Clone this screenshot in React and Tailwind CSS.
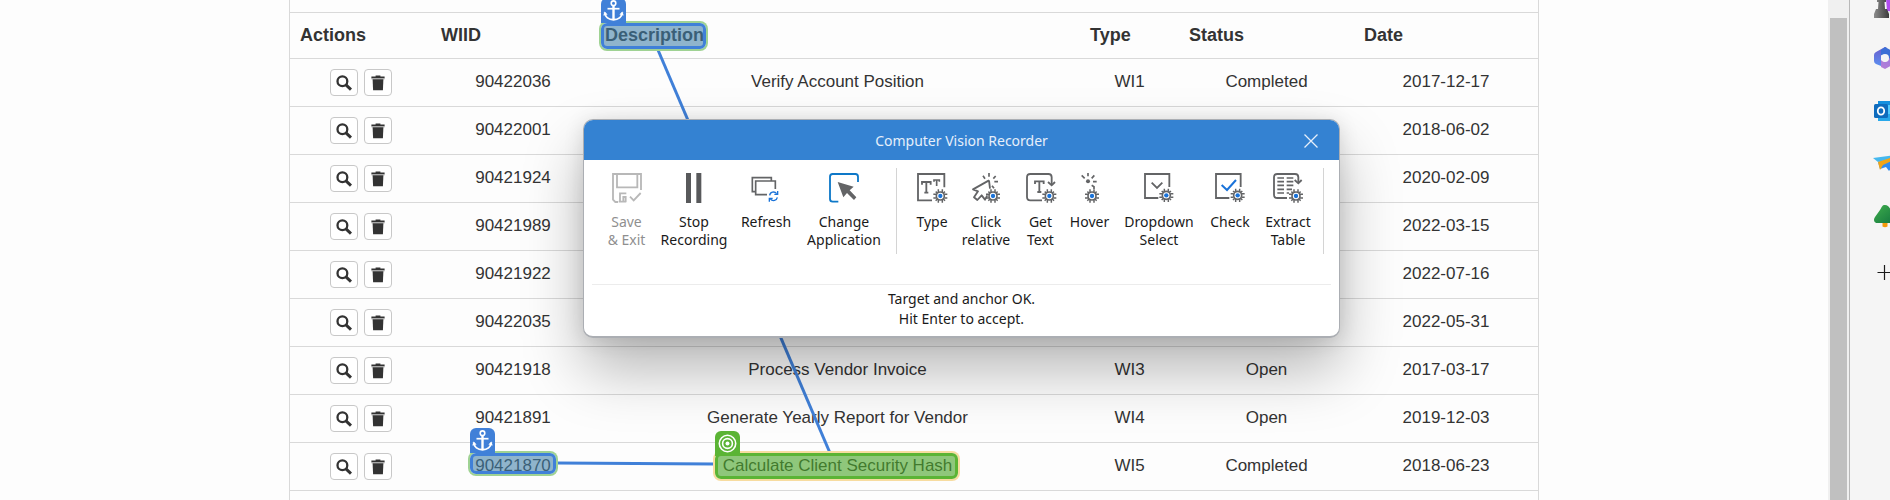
import React from "react";

const rows = [
  { id: "90422036", description: "Verify Account Position", type: "WI1", status: "Completed", date: "2017-12-17" },
  { id: "90422001", description: "", type: "", status: "", date: "2018-06-02" },
  { id: "90421924", description: "", type: "", status: "", date: "2020-02-09" },
  { id: "90421989", description: "", type: "", status: "", date: "2022-03-15" },
  { id: "90421922", description: "", type: "", status: "", date: "2022-07-16" },
  { id: "90422035", description: "", type: "", status: "", date: "2022-05-31" },
  { id: "90421918", description: "Process Vendor Invoice", type: "WI3", status: "Open", date: "2017-03-17" },
  { id: "90421891", description: "Generate Yearly Report for Vendor", type: "WI4", status: "Open", date: "2019-12-03" },
  { id: "90421870", description: "Calculate Client Security Hash", type: "WI5", status: "Completed", date: "2018-06-23" },
];

const columns = [
  { name: "Actions", width: "w-[141px]" },
  { name: "WIID", width: "w-[164px]" },
  { name: "Description", width: "w-auto" },
  { name: "Type", width: "w-[99px]" },
  { name: "Status", width: "w-[175px]" },
  { name: "Date", width: "w-[184px]" },
];

/* ---------- table ---------- */

function SearchIcon() {
  return (
    <svg className="h-4 w-4" viewBox="0 0 16 16" fill="none" stroke="#333" aria-hidden="true">
      <circle cx="6.4" cy="6.2" r="4.9" strokeWidth="2.3" />
      <path d="M10 9.8 15 14.6" strokeWidth="3" />
    </svg>
  );
}

function TrashIcon() {
  return (
    <svg className="h-4 w-4" viewBox="0 0 16 16" fill="#333" aria-hidden="true">
      <path d="M5.6 1.6V.4h4.8v1.2h4.2v1.7H1.4V1.6z" />
      <path d="M1.4 3.3h13.2v1H1.4z" fill="#9a9a9a" />
      <path d="M2.6 4.3h10.800l-.5 10.900H3.100z" />
    </svg>
  );
}

function RowButton({ label, children }) {
  return (
    <button
      type="button"
      aria-label={label}
      className="flex h-[27px] w-7 items-center justify-center rounded border border-[#c8c8c8] bg-white"
    >
      {children}
    </button>
  );
}

function WorkItemsTable() {
  return (
    <table className="w-full table-fixed border-collapse text-[#333]">
      <colgroup>
        {columns.map((c) => (
          <col key={c.name} className={c.width} />
        ))}
      </colgroup>
      <thead className="text-lg leading-[25px]">
        <tr className="border-y border-[#d9d9d9]">
          {columns.map((c) => (
            <th key={c.name} scope="col" className="px-2.5 py-2.5 text-left font-bold">
              {c.name}
            </th>
          ))}
        </tr>
      </thead>
      <tbody>
        {rows.map((r) => (
          <tr key={r.id} className="border-b border-[#d9d9d9] text-center align-top">
            <td className="py-2.5">
              <div className="flex justify-center gap-1.5">
                <RowButton label={"View " + r.id}>
                  <SearchIcon />
                </RowButton>
                <RowButton label={"Delete " + r.id}>
                  <TrashIcon />
                </RowButton>
              </div>
            </td>
            <td className="py-2.5">{r.id}</td>
            <td className="py-2.5">{r.description}</td>
            <td className="py-2.5">{r.type}</td>
            <td className="py-2.5">{r.status}</td>
            <td className="py-2.5">{r.date}</td>
          </tr>
        ))}
      </tbody>
    </table>
  );
}

/* ---------- target and anchor markers ---------- */

function AnchorGlyph() {
  return (
    <svg className="h-[25px] w-[25px]" viewBox="0 0 25 25" fill="none" stroke="#fff" aria-hidden="true">
      <circle cx="12.5" cy="5.2" r="2.3" strokeWidth="1.6" />
      <path d="M12.5 7.5V22" strokeWidth="2.4" />
      <path d="M6.5 10.7h12" strokeWidth="1.7" />
      <path d="M3.6 14.5c.6 4.6 4.2 7.3 8.9 7.3s8.300-2.700 8.900-7.300" strokeWidth="1.9" />
      <path d="M2.300 17.500 3.600 13.500 6.600 16.500zM22.700 17.500 21.400 13.500 18.400 16.500z" fill="#fff" stroke="none" />
    </svg>
  );
}

function TargetGlyph() {
  return (
    <svg className="h-[25px] w-[25px]" viewBox="0 0 25 25" fill="none" stroke="#fff" strokeWidth="1.6" aria-hidden="true">
      <circle cx="12.5" cy="12.5" r="8.2" />
      <circle cx="12.5" cy="12.5" r="4.9" />
      <circle cx="12.5" cy="12.5" r="2" fill="#fff" stroke="none" />
    </svg>
  );
}

function Markers() {
  return (
    <div className="pointer-events-none absolute inset-0" aria-hidden="true">
      <svg className="absolute inset-0 h-full w-full" stroke="#4080d8" strokeWidth="3">
        <line x1="368" y1="50" x2="540" y2="453" />
        <line x1="267" y1="463" x2="424" y2="464" />
      </svg>

      <div className="absolute left-[311px] top-[23px] h-[26px] w-[105px] rounded-md border-[3px] border-[#4080d8] bg-[#3f80a9]/58 ring-2 ring-[#9fd293]" />
      <div className="absolute left-[311px] top-[-2px] rounded-t-md bg-[#4080d8]">
        <AnchorGlyph />
      </div>

      <div className="absolute left-[180px] top-[453px] h-[21px] w-[86px] rounded-md border-[3px] border-[#4080d8] bg-[#3f80a9]/58 ring-2 ring-[#9fd293]" />
      <div className="absolute left-[180px] top-[428px] rounded-t-md bg-[#4080d8]">
        <AnchorGlyph />
      </div>

      <div className="absolute left-[425px] top-[453px] h-[26px] w-[243px] rounded-md border-[3px] border-[#5bb435] bg-[#4ca62c]/62 ring-2 ring-[#f7dca0]" />
      <div className="absolute left-[425px] top-[431px] rounded-t-md bg-[#5bb435]">
        <TargetGlyph />
      </div>
    </div>
  );
}

/* ---------- recorder icons, drawn on a 90 unit grid ---------- */

function ToolIcon({ children }) {
  return (
    <svg className="h-[30px] w-[30px] overflow-visible" viewBox="0 0 90 90" fill="none" stroke="#636466" strokeWidth="5.5" aria-hidden="true">
      {children}
    </svg>
  );
}

function Gear({ x, y }) {
  return (
    <g transform={"translate(" + x + " " + y + ")"}>
      <path
        d="M-6 -20V-11M6 -20V-11M-6 20V11M6 20V11M-21 -5H-12M-21 6H-12M21 -5H12M21 6H12M-14 -13-9 -9M14 -13 9 -9M-14 14-9 9M14 14 9 9"
        strokeWidth="4.5"
      />
      <circle r="12" fill="#fff" strokeWidth="5" />
      <circle r="6.5" fill="#1a73d9" stroke="none" />
    </g>
  );
}

function BigT({ x, y }) {
  return (
    <g transform={"translate(" + x + " " + y + ")"}>
      <path d="M2 10V2H28V10M15 2V34M9 34H21" />
    </g>
  );
}

const SaveIcon = () => (
  <ToolIcon>
    <g stroke="#b8b8b8">
      <path d="M87 51V3H3V80L10 87H18M15 3V43H76V3" />
      <path d="M24 88V61H43M34 88V72H41V88M20 86H42" />
      <path d="M54 71 65 82 86 60" />
    </g>
  </ToolIcon>
);

const PauseIcon = () => (
  <ToolIcon>
    <path d="M21 0H36V90H21zM52 0H67V90H52z" fill="#58595b" stroke="none" />
  </ToolIcon>
);

const RefreshIcon = () => (
  <ToolIcon>
    <path d="M12 56H4V14H61V22M48 65H14V24H73V48" strokeWidth="5" />
    <g stroke="#1a73d9" strokeWidth="4">
      <path d="M56 67C57 57 70 53 77 62M79 73C77 83 65 86 58 78" />
      <path d="M80 54V64H70M55 86V76H65" />
    </g>
  </ToolIcon>
);

const ChangeAppIcon = () => (
  <ToolIcon>
    <path d="M87 27V11Q87 3 79 3H11Q3 3 3 11V78Q3 86 11 86H28" stroke="#0e78c8" />
    <path d="M26 27 74 41 62 52 82 73 75 81 54 60 43 73z" fill="#636466" stroke="none" />
  </ToolIcon>
);

const TypeIcon = () => (
  <ToolIcon>
    <path d="M45 82H3V3H82V43" />
    <BigT x={13} y={25} />
    <path d="M51 26V21H67V26M59 21V39" strokeWidth="5" />
    <Gear x={70} y={69} />
  </ToolIcon>
);

const ClickRelativeIcon = () => (
  <ToolIcon>
    <path d="M54 22 6 49 21 55 9 73 19 81 32 67 42 80 49 67M54 22 57 47" strokeLinejoin="round" />
    <path d="M54 0V11M36 8 42 17M74 9 67 17M70 26H81M63 38 69 46" strokeWidth="5" />
    <Gear x={66} y={69} />
  </ToolIcon>
);

const GetTextIcon = () => (
  <ToolIcon>
    <path d="M48 82H13Q3 82 3 72V13Q3 3 13 3H67Q77 3 77 13V34" />
    <path d="M66 27 77 37 87 27" />
    <BigT x={25} y={23} />
    <Gear x={70} y={69} />
  </ToolIcon>
);

const HoverIcon = () => (
  <ToolIcon>
    <circle cx="39" cy="25" r="6" fill="#636466" stroke="none" />
    <path d="M39 0V10M20 7 29 16M58 7 50 16M54 26H65M50 37 57 41V48" strokeWidth="5" />
    <Gear x={51} y={69} />
  </ToolIcon>
);

const DropdownIcon = () => (
  <ToolIcon>
    <path d="M43 75H3V3H76V42" />
    <path d="M23 29 39 45 55 29" />
    <Gear x={67} y={67} />
  </ToolIcon>
);

const CheckIcon = () => (
  <ToolIcon>
    <path d="M43 75H3V3H77V42" />
    <path d="M20 36 36 51 63 21" stroke="#1a73d9" strokeWidth="6" />
    <Gear x={68} y={67} />
  </ToolIcon>
);

const ExtractIcon = () => (
  <ToolIcon>
    <path d="M42 75H13Q3 75 3 65V13Q3 3 13 3H66Q76 3 76 13V30" />
    <path d="M65 21 76 31 86 21" />
    <path
      d="M13 15H33M41 15H61M13 26H33M41 26H61M13 37H33M41 37H61M13 49H33M41 49H57M13 60H33M41 60H48"
      strokeWidth="5"
    />
    <Gear x={69} y={69} />
  </ToolIcon>
);

/* ---------- recorder window ---------- */

function Tool({ icon: Icon, lines, width, disabled }) {
  return (
    <button
      type="button"
      disabled={disabled}
      className={"flex shrink-0 flex-col items-center gap-2.5 text-[#1a1a1a] disabled:text-[#8f8f8f] " + width}
    >
      <Icon />
      <span className="block whitespace-nowrap text-center leading-[18px]">
        {lines.map((l) => (
          <span key={l} className="block">
            {l}
          </span>
        ))}
      </span>
    </button>
  );
}

function Recorder() {
  return (
    <section
      aria-label="Computer Vision Recorder"
      className="absolute left-[293px] top-[119px] w-[757px] overflow-hidden rounded-[10px] border border-b-2 border-[#abaeb3] bg-white font-['Noto_Sans','Open_Sans',sans-serif] text-sm shadow-[0_32px_60px_rgba(0,0,0,0.28),0_2px_20px_rgba(0,0,0,0.12)]"
    >
      <header className="grid h-10 grid-cols-[1fr_auto_1fr] items-center bg-[#3482d2] pt-0.5 text-[#e6effa]">
        <h1 className="col-start-2">Computer Vision Recorder</h1>
        <button type="button" aria-label="Close" className="mr-5 justify-self-end">
          <svg className="h-4 w-4" viewBox="0 0 16 16" stroke="currentColor" strokeWidth="1.3" aria-hidden="true">
            <path d="M1.5 1.5 14.5 14.5M14.5 1.5 1.5 14.5" />
          </svg>
        </button>
      </header>

      <div className="flex h-[94px] items-stretch pl-[17px] pt-2">
        <div className="flex items-start pt-[5px]">
          <Tool icon={SaveIcon} lines={["Save", "& Exit"]} width="w-[51px]" disabled />
          <Tool icon={PauseIcon} lines={["Stop", "Recording"]} width="w-[84px]" />
          <Tool icon={RefreshIcon} lines={["Refresh"]} width="w-[60px]" />
          <Tool icon={ChangeAppIcon} lines={["Change", "Application"]} width="w-[96px]" />
        </div>
        <div className="ml-1 w-px bg-[#d4d4d4]" />
        <div className="flex items-start pl-2.5 pt-[5px]">
          <Tool icon={TypeIcon} lines={["Type"]} width="w-[50px]" />
          <Tool icon={ClickRelativeIcon} lines={["Click", "relative"]} width="w-[58px]" />
          <Tool icon={GetTextIcon} lines={["Get", "Text"]} width="w-[51px]" />
          <Tool icon={HoverIcon} lines={["Hover"]} width="w-[47px]" />
          <Tool icon={DropdownIcon} lines={["Dropdown", "Select"]} width="w-[92px]" />
          <Tool icon={CheckIcon} lines={["Check"]} width="w-[50px]" />
          <Tool icon={ExtractIcon} lines={["Extract", "Table"]} width="w-[66px]" />
        </div>
        <div className="ml-0.5 w-px bg-[#d4d4d4]" />
      </div>

      <p className="mx-2 mt-[30px] border-t border-[#ececec] pb-[7px] pt-1 text-center leading-5 text-[#1a1a1a]">
        Target and anchor OK.
        <br />
        Hit Enter to accept.
      </p>
    </section>
  );
}

/* ---------- browser edge ---------- */

function SideLink({ label, children }) {
  return (
    <a href="#" aria-label={label} className="block shrink-0">
      <svg className="h-[22px] w-[22px] overflow-visible" viewBox="0 0 22 22" aria-hidden="true">
        {children}
      </svg>
    </a>
  );
}

function Sidebar() {
  return (
    <nav
      aria-label="Browser sidebar"
      className="flex w-[41px] shrink-0 flex-col gap-[31px] overflow-hidden border-l border-[#b8b8b8] bg-[#f5f5f5] pl-6"
    >
      <div className="-mt-1.5">
        <SideLink label="Games">
          <defs>
            <linearGradient id="pawn" x1="0" x2="1">
              <stop offset="0" stopColor="#8c8c8c" />
              <stop offset="1" stopColor="#3c3c3c" />
            </linearGradient>
          </defs>
          <path d="M12 4h10v14l-9-1z" fill="#b04cf0" />
          <path d="M3 4h9v4H10.5l.5 7h2l2 5v4H0v-4l2-5h2l.5-7H3z" fill="url(#pawn)" />
        </SideLink>
      </div>
      <SideLink label="Microsoft 365">
        <defs>
          <linearGradient id="suiteLeft" x1="0" y1="0" x2="0" y2="1">
            <stop offset="0" stopColor="#6a5ccc" />
            <stop offset="1" stopColor="#5b8ff0" />
          </linearGradient>
          <linearGradient id="suiteBase" x1="0" y1="1" x2="1" y2="0">
            <stop offset="0" stopColor="#b57fd6" />
            <stop offset="1" stopColor="#9a78e0" />
          </linearGradient>
        </defs>
        <path d="M11 0 2 5Q0 6 0 8V14Q0 16 2 17L7 19V8L13 5V1z" fill="url(#suiteLeft)" />
        <path d="M11 0 20 5Q22 6 22 8V15L7 8V3z" fill="#3c6fd6" />
        <path d="M7 13V20L11 22 20 17Q22 16 22 14V8L16 11 11 15z" fill="url(#suiteBase)" />
        <circle cx="11" cy="11" r="4" fill="#f5f5f5" />
      </SideLink>
      <SideLink label="Outlook">
        <path d="M4 1h18v20H4z" fill="#28a8ea" />
        <path d="M4 1h18v4H4z" fill="#1490df" />
        <path d="M14 5h8v9h-8z" fill="#50c8fa" />
        <rect x="0" y="4" width="14" height="14" rx="1.5" fill="#0f6cbd" />
        <ellipse cx="7" cy="11" rx="3.2" ry="3.6" fill="none" stroke="#fff" strokeWidth="1.8" />
      </SideLink>
      <SideLink label="Drop">
        <path d="M4 9 22 3V17L18 14 15 18 12 14 6 16z" fill="#2f8cf0" />
        <path d="M-1 5 22 2V4L4 9z" fill="#45b8ee" />
        <path d="M4 9 22 3V6L9 12 6 17z" fill="#f2a516" />
      </SideLink>
      <SideLink label="Browser essentials">
        <defs>
          <linearGradient id="tree" x1="0" y1="0" x2="1" y2="1">
            <stop offset="0" stopColor="#3fae4c" />
            <stop offset="1" stopColor="#13753f" />
          </linearGradient>
        </defs>
        <path d="M8.5 15h5v5.5q-2.500 1.500-5 0z" fill="#f59a0a" />
        <path d="M11 -1C14 -1 15 1 17 4L21 11C23 14 21 17 18 17H4C0 17-1 14 1 11L6 4C8 1 8 -1 11 -1Z" fill="url(#tree)" />
      </SideLink>
      <SideLink label="Customize">
        <path d="M3.5 13.5H19M10.5 6V21" stroke="#1b1b1b" strokeWidth="1.2" />
      </SideLink>
    </nav>
  );
}

export default function App() {
  return (
    <div className="flex h-screen overflow-hidden bg-[#fdfdfd] font-['Liberation_Sans',Arial,sans-serif] text-[17px] leading-[25px]">
      <main className="min-w-0 flex-1">
        <div className="relative mx-auto min-h-full max-w-[1250px] border-x border-[#d9d9d9] pt-3">
          <WorkItemsTable />
          <Markers />
          <Recorder />
        </div>
      </main>
      <div className="w-[21px] shrink-0 bg-[#f0f0f0] px-0.5 pt-[18px]">
        <div className="h-full bg-[#c0c0c0]" />
      </div>
      <Sidebar />
    </div>
  );
}
